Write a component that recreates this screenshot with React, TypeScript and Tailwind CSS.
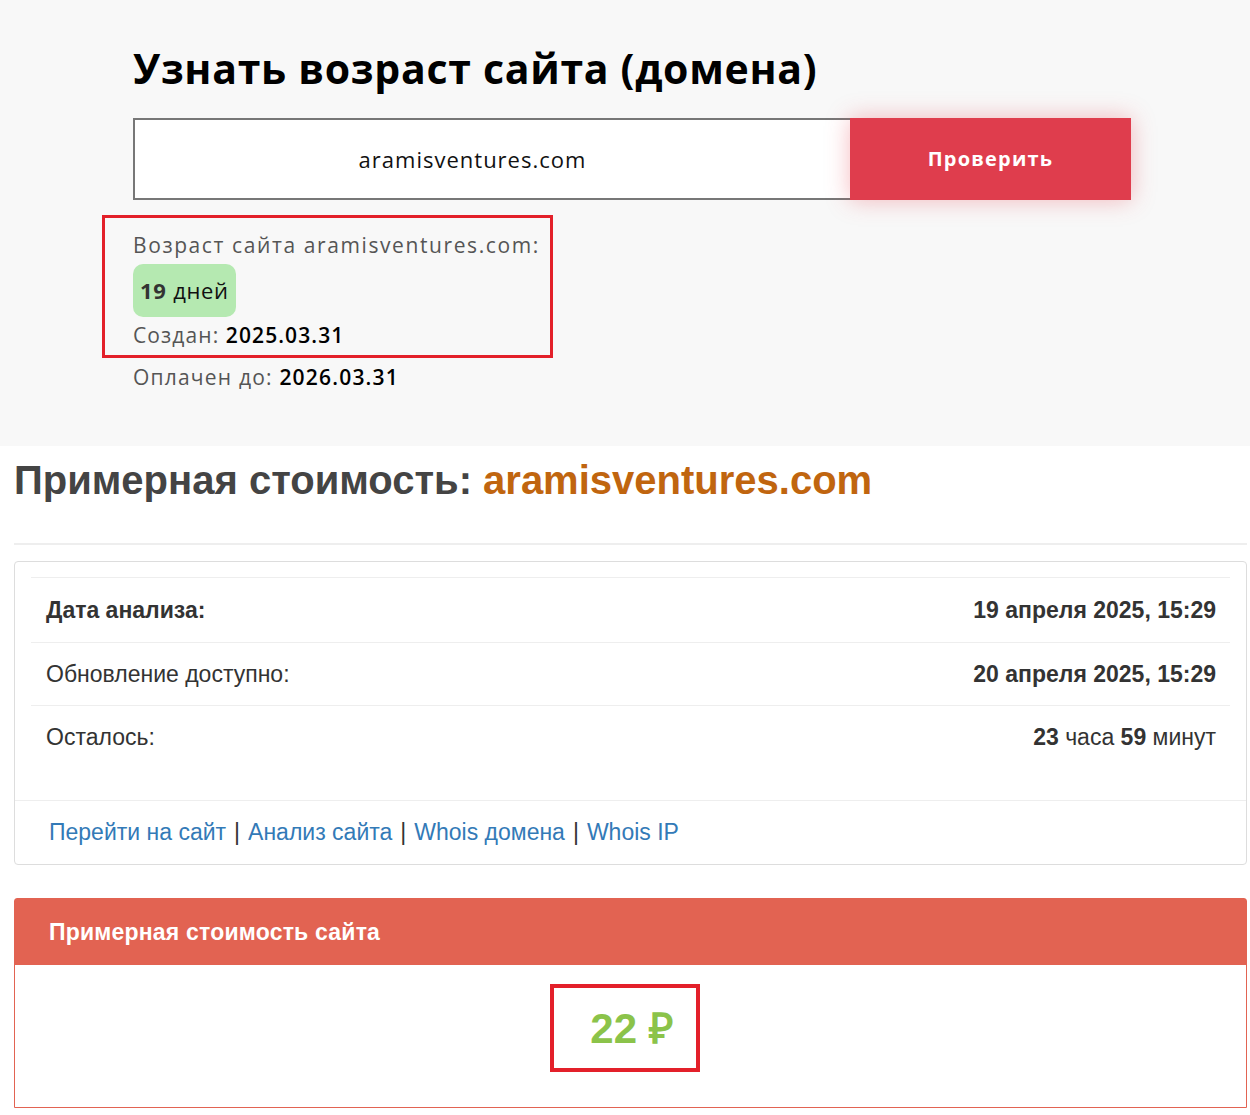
export default function App() {
  return (
    <div className="w-[1250px] min-h-[1115px] bg-white">
      {/* проверка возраста домена */}
      <section className="bg-[#f8f8f8] h-[446px] pl-[133px] pt-[40px] font-['Open_Sans',sans-serif]">
        <h1 className="text-[41px] leading-[56px] font-bold text-black tracking-[0.7px]">
          Узнать возраст сайта (домена)
        </h1>
        <div className="flex mt-[22px] w-[998px]">
          <div className="w-[717px] h-[82px] bg-white border-2 border-[#777] border-r-0 flex items-center justify-center pr-[40px]">
            <span className="text-[22px] tracking-[1px] text-[#111]">aramisventures.com</span>
          </div>
          <button className="w-[281px] h-[82px] bg-[#df3d4d] text-white text-[20px] tracking-[1.2px] font-bold shadow-[0_0_22px_rgba(230,60,75,0.35)]">
            Проверить
          </button>
        </div>

        <div className="mt-[15px] ml-[-31px] w-[451px] border-[3px] border-[#e3202a] pl-[28px] pt-[8px] pb-[2px]">
          <div className="text-[21px] tracking-[1.6px] leading-[38px] text-[#555]">
            Возраст сайта aramisventures.com:
          </div>
          <div className="inline-flex items-center h-[53px] px-[7px] rounded-[10px] bg-[#b5e9b1] text-[22px] tracking-[0.6px]">
            <span className="font-bold text-[#333]">19</span>
            <span className="ml-[7px] font-medium text-[#111]">дней</span>
          </div>
          <div className="text-[21px] tracking-[1.1px] leading-[36px] text-[#555]">
            Создан: <span className="text-black font-semibold">2025.03.31</span>
          </div>
        </div>
        <div className="text-[21px] tracking-[1.2px] leading-[38px] text-[#555]">
          Оплачен до: <span className="text-black font-semibold">2026.03.31</span>
        </div>
      </section>

      {/* стоимость */}
      <section className="pl-[14px] pr-[3px] font-['Liberation_Sans',Arial,sans-serif]">
        <h2 className="text-[40px] leading-[68px] font-bold text-[#444]">
          Примерная стоимость: <span className="text-[#c0650f]">aramisventures.com</span>
        </h2>
        <div className="mt-[29px] h-[2px] bg-[#eeeeee]" />

        <div className="mt-[16px] border border-[#dddddd] rounded-[4px]">
          <div className="px-[16px] pt-[15px] pb-[32px]">
            <div className="border-t border-[#eeeeee] h-[65px] flex items-center justify-between pl-[15px] pr-[14px] text-[23px] text-[#333]">
              <span className="font-bold">Дата анализа:</span>
              <span className="font-bold">19 апреля 2025, 15:29</span>
            </div>
            <div className="border-t border-[#eeeeee] h-[63px] flex items-center justify-between pl-[15px] pr-[14px] text-[23px] text-[#333]">
              <span>Обновление доступно:</span>
              <span className="font-bold">20 апреля 2025, 15:29</span>
            </div>
            <div className="border-t border-[#eeeeee] h-[63px] flex items-center justify-between pl-[15px] pr-[14px] text-[23px] text-[#333]">
              <span>Осталось:</span>
              <span>
                <b>23</b> часа <b>59</b> минут
              </span>
            </div>
          </div>
          <div className="border-t border-[#eeeeee] h-[64px] flex items-center px-[34px] text-[23px] text-[#333]">
            <a className="text-[#337ab7]">Перейти на сайт</a>
            <span className="mx-[8px]">|</span>
            <a className="text-[#337ab7]">Анализ сайта</a>
            <span className="mx-[8px]">|</span>
            <a className="text-[#337ab7]">Whois домена</a>
            <span className="mx-[8px]">|</span>
            <a className="text-[#337ab7]">Whois IP</a>
          </div>
        </div>

        <div className="mt-[33px] border border-[#e26352] rounded-t-[3px]">
          <div className="h-[66px] bg-[#e26352] flex items-center px-[34px] text-white font-bold text-[23px] tracking-[0.2px]">
            Примерная стоимость сайта
          </div>
          <div className="h-[142px] flex justify-center pt-[19px] pr-[12px]">
            <div className="w-[150px] h-[88px] border-4 border-[#e3202a] flex items-center justify-center pl-[14px]">
              <span className="text-[42px] font-bold text-[#8bc34a]">22 ₽</span>
            </div>
          </div>
        </div>
      </section>
    </div>
  );
}
